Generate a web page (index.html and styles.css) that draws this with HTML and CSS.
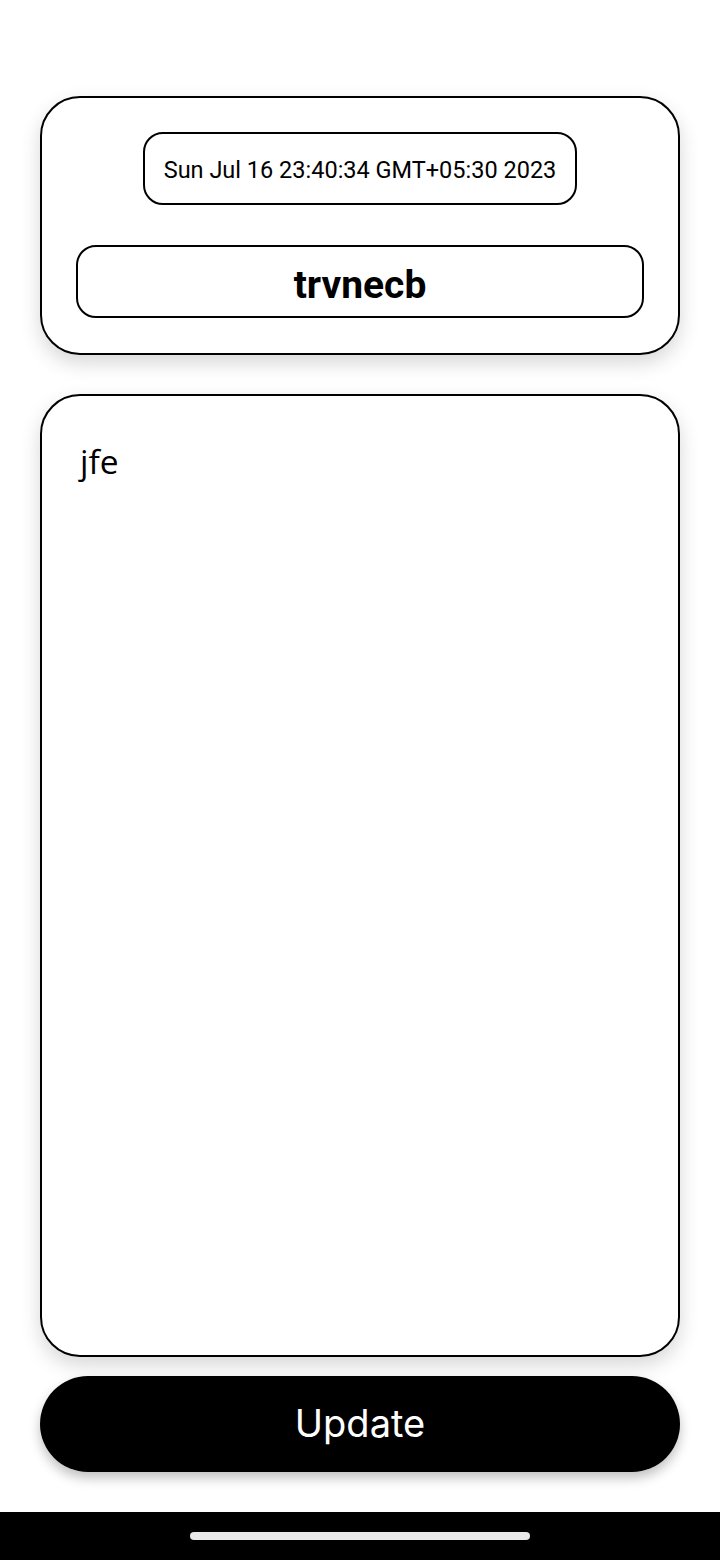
FILE: index.html
```html
<!DOCTYPE html>
<html>
<head>
<meta charset="utf-8">
<link rel="stylesheet" href="styles.css">
</head>
<body>
<div class="screen">
  <main class="content">
    <section class="card header-card">
      <div class="date-box">Sun Jul 16 23:40:34 GMT+05:30 2023</div>
      <div class="title-box">trvnecb</div>
    </section>
    <section class="card note-card">
      <div class="note-text">jfe</div>
    </section>
    <button class="update-btn">Update</button>
  </main>
  <div class="navbar"><div class="handle"></div></div>
</div>
</body>
</html>
```
FILE: styles.css
```css
* { box-sizing: border-box; }
html, body { margin: 0; padding: 0; background: #fff; }
body { font-family: Roboto, "Noto Sans", sans-serif; color: #000; }
.screen { width: 720px; height: 1560px; display: flex; flex-direction: column; }
.content { flex: 1; display: flex; flex-direction: column; padding: 96px 40px 0; }
.card {
  background: #fff;
  border: 2px solid #000;
  border-radius: 40px;
  box-shadow: 0 8px 20px rgba(0,0,0,0.16);
}
.header-card {
  height: 259px;
  display: flex;
  flex-direction: column;
  align-items: center;
  padding: 34px 34px 0;
  gap: 40px;
}
.date-box {
  width: 434px;
  height: 73px;
  border: 2px solid #000;
  border-radius: 20px;
  display: flex;
  align-items: center;
  justify-content: center;
  padding-top: 3px;
  font-size: 23.5px;
}
.title-box {
  width: 568px;
  height: 73px;
  border: 2px solid #000;
  border-radius: 20px;
  display: flex;
  align-items: center;
  justify-content: center;
  padding-top: 6px;
  font-size: 39px;
  font-weight: 700;
}
.note-card {
  margin-top: 39px;
  height: 963px;
  padding: 38px 38px;
}
.note-text {
  font-family: "Open Sans", "Noto Sans", sans-serif;
  font-size: 33.5px;
  line-height: 48px;
  padding-top: 3px;
}
.update-btn {
  margin-top: 19px;
  height: 96px;
  border: none;
  border-radius: 48px;
  background: #000;
  color: #fff;
  font-family: Inter, Roboto, sans-serif;
  font-size: 38px;
  font-weight: 400;
  padding-bottom: 4px;
  box-shadow: 0 6px 12px rgba(0,0,0,0.25);
}
.navbar {
  height: 48px;
  background: #000;
  display: flex;
  align-items: center;
  justify-content: center;
}
.handle { width: 340px; height: 8px; border-radius: 4px; background: #e8e8e8; }
```
